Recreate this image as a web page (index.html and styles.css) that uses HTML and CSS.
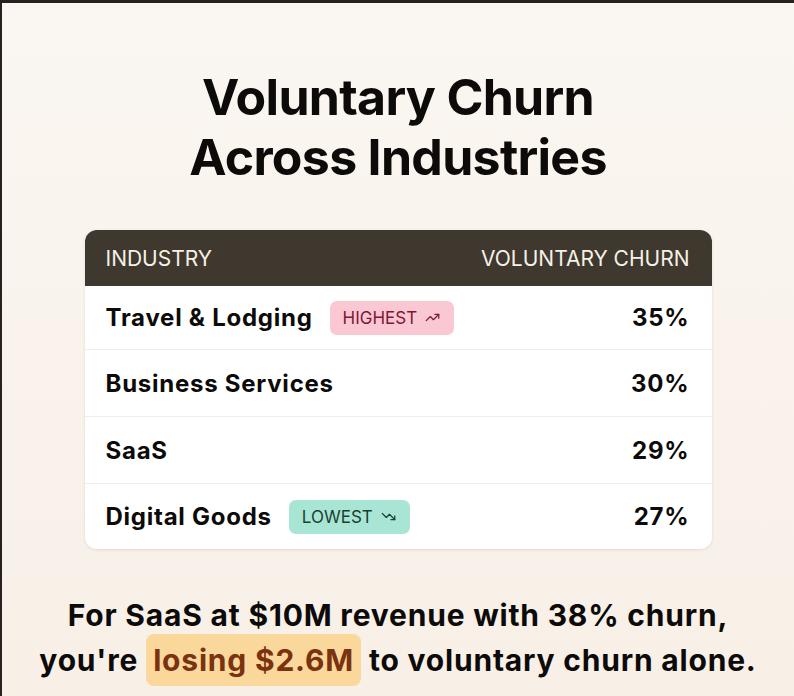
FILE: index.html
```html
<!DOCTYPE html>
<html lang="en">
<head>
<meta charset="utf-8">
<title>Voluntary Churn Across Industries</title>
<link rel="stylesheet" href="styles.css">
</head>
<body>
<main class="page">
  <h1 class="title">Voluntary Churn<br>Across Industries</h1>
  <section class="card">
    <div class="row head">
      <span>INDUSTRY</span>
      <span>VOLUNTARY CHURN</span>
    </div>
    <div class="row first">
      <div class="name">Travel &amp; Lodging
        <span class="badge high">HIGHEST
          <svg viewBox="0 0 24 24" class="ico"><polyline points="22 7 13.5 15.5 8.5 10.5 2 17"/><polyline points="16 7 22 7 22 13"/></svg>
        </span>
      </div>
      <span class="pct">35%</span>
    </div>
    <div class="row">
      <div class="name">Business Services</div>
      <span class="pct">30%</span>
    </div>
    <div class="row">
      <div class="name">SaaS</div>
      <span class="pct">29%</span>
    </div>
    <div class="row last">
      <div class="name">Digital Goods
        <span class="badge low">LOWEST
          <svg viewBox="0 0 24 24" class="ico"><polyline points="22 17 13.5 8.5 8.5 13.5 2 7"/><polyline points="16 17 22 17 22 11"/></svg>
        </span>
      </div>
      <span class="pct">27%</span>
    </div>
  </section>
  <p class="note">For SaaS at $10M revenue with 38% churn,<br>you're <mark class="hl">losing $2.6M</mark> to voluntary churn alone.</p>
</main>
</body>
</html>
```

FILE: styles.css
```css
html, body {
  margin: 0;
  padding: 0;
  height: 100%;
}
body {
  background: linear-gradient(180deg, #faf6f1 0%, #f8f0e7 100%);
  border-top: 3px solid #27221f;
  border-left: 2px solid #27221f;
  box-sizing: border-box;
  font-family: "Inter", "Liberation Sans", sans-serif;
  color: #0d0b09;
  overflow: hidden;
}
.page {
  display: flex;
  flex-direction: column;
  align-items: center;
  padding-top: 64px;
}
.title {
  margin: 0;
  font-size: 50px;
  line-height: 60px;
  font-weight: 700;
  letter-spacing: -0.7px;
  text-align: center;
}
.card {
  margin-top: 43px;
  width: 627px;
  background: #fff;
  border-radius: 12px;
  overflow: hidden;
  box-shadow: 0 1px 3px rgba(80, 60, 40, 0.12);
}
.row {
  box-sizing: border-box;
  display: flex;
  align-items: center;
  justify-content: space-between;
  height: 67px;
  padding: 0 22px 0 21px;
  border-bottom: 1px solid #f3ece3;
}
.row.first { height: 64px; }
.row.last { border-bottom: 0; height: 65px; }
.row.head {
  height: 56px;
  background: #3f382e;
  color: #f6f0e7;
  font-size: 21px;
  font-weight: 400;
  border-bottom: 0;
}
.name {
  display: flex;
  align-items: center;
  gap: 17px;
  font-size: 24px;
  font-weight: 700;
  letter-spacing: 0.75px;
}
.pct {
  font-size: 24px;
  font-weight: 700;
  letter-spacing: 0.8px;
}
.badge {
  display: inline-flex;
  align-items: center;
  gap: 8px;
  height: 34px;
  padding: 0 14px 0 13px;
  border-radius: 7px;
  font-size: 17px;
  font-weight: 400;
  letter-spacing: 0;
}
.badge.high { background: #fac8d3; color: #7f1735; }
.badge.low { background: #a9e5d4; color: #1a3f33; }
.ico {
  width: 15px;
  height: 15px;
  fill: none;
  stroke: currentColor;
  stroke-width: 2;
  stroke-linecap: round;
  stroke-linejoin: round;
}
.note {
  margin: 44px 0 0;
  font-size: 30px;
  line-height: 45px;
  font-weight: 700;
  letter-spacing: 0.8px;
  text-align: center;
}
.hl {
  background: #fad89c;
  color: #7a3210;
  border-radius: 8px;
  padding: 8px 7px;
}
```
